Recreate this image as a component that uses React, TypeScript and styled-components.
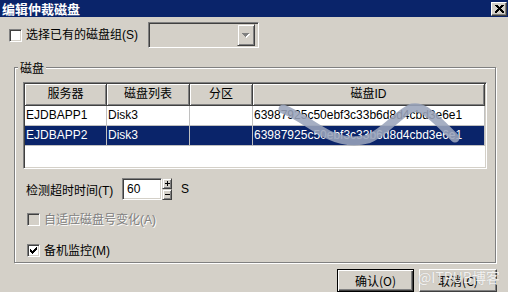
import React from "react";
import styled, { createGlobalStyle } from "styled-components";

const FACE = "#d4d0c8";
const SHADOW = "#808080";
const DARK = "#404040";
const NAVY = "#0a246a";

const GlobalStyle = createGlobalStyle`
  html, body { margin: 0; padding: 0; background: ${FACE}; }
  body {
    width: 508px; height: 292px; overflow: hidden;
    font-family: "Liberation Sans", "Noto Sans CJK SC", sans-serif;
    font-size: 12px; color: #000;
  }
  * { box-sizing: border-box; }
`;

const Dialog = styled.div`
  width: 508px; height: 292px; display: flex; flex-direction: column;
  background: ${FACE}; overflow: hidden;
`;

const TitleBar = styled.div`
  flex: 0 0 17px; height: 17px; background: ${NAVY};
  display: flex; align-items: center; justify-content: space-between;
  padding: 0 1px 0 2px;
`;

const Title = styled.span`
  color: #fff; font-weight: bold; font-size: 13px; line-height: 17px;
  font-family: "Noto Sans CJK SC", sans-serif;
`;

const CloseBtn = styled.div`
  width: 16px; height: 14px; background: ${FACE};
  border: 1px solid; border-color: #fff ${DARK} ${DARK} #fff;
  box-shadow: inset -1px -1px 0 ${SHADOW};
  display: flex; align-items: center; justify-content: center;
`;

const TopRow = styled.div`
  display: flex; align-items: center; height: 26px; margin-top: 5px; padding-left: 9px;
`;

const CheckLabel = styled.div<{ $w?: number; $disabled?: boolean }>`
  display: flex; align-items: center; gap: 4px; height: 13px;
  ${(p) => (p.$w ? `flex: 0 0 ${p.$w}px;` : "")}
  color: ${(p) => (p.$disabled ? SHADOW : "#000")};
  text-shadow: ${(p) => (p.$disabled ? "1px 1px 0 #fff" : "none")};
  line-height: 14px; white-space: nowrap;
`;

const Box = styled.div<{ $disabled?: boolean }>`
  flex: 0 0 13px; width: 13px; height: 13px;
  background: ${(p) => (p.$disabled ? FACE : "#fff")};
  border: 1px solid; border-color: ${SHADOW} #fff #fff ${SHADOW};
  box-shadow: inset 1px 1px 0 ${DARK}, inset -1px -1px 0 ${FACE};
  display: flex; align-items: center; justify-content: center;
`;

const Combo = styled.div`
  width: 111px; height: 26px; background: ${FACE};
  border: 1px solid; border-color: ${SHADOW} #fff #fff ${SHADOW};
  box-shadow: inset 1px 1px 0 ${DARK}, inset -1px -1px 0 ${FACE};
  display: flex; align-items: center; justify-content: flex-end; padding: 2px 3px 2px 2px;
`;

const ComboBtn = styled.div`
  width: 18px; height: 22px; background: ${FACE};
  border: 1px solid; border-color: ${FACE} ${DARK} ${DARK} ${FACE};
  box-shadow: inset 1px 1px 0 #fff, inset -1px -1px 0 ${SHADOW};
  display: flex; align-items: center; justify-content: center;
`;

const Group = styled.div`
  margin: 19px 0 0 14px; width: 482px; height: 197px;
  border: 1px solid ${SHADOW};
  box-shadow: 1px 1px 0 #fff, inset 1px 1px 0 #fff;
  display: flex; flex-direction: column;
`;

const Legend = styled.span`
  align-self: flex-start; margin: -7px 0 0 3px; padding: 0 2px;
  background: ${FACE}; height: 14px; line-height: 14px;
  font-family: "Noto Sans CJK SC", sans-serif;
`;

const ListView = styled.div`
  position: relative; margin: 7px 0 0 8px; width: 464px; height: 87px;
  background: #fff; overflow: hidden;
  border: 1px solid; border-color: ${SHADOW} #fff #fff ${SHADOW};
  box-shadow: inset 1px 1px 0 ${DARK}, inset -1px -1px 0 ${FACE};
  padding: 1px;
`;

const Header = styled.div`
  display: flex; height: 22px;
`;

const HeaderCell = styled.div<{ $w: number }>`
  flex: 0 0 ${(p) => p.$w}px; height: 22px; background: ${FACE};
  border-right: 1px solid ${DARK}; border-bottom: 1px solid ${DARK};
  box-shadow: inset 1px 1px 0 #fff, inset -1px -1px 0 ${SHADOW};
  text-align: center; line-height: 21px; white-space: nowrap; overflow: hidden;
`;

const Row = styled.div<{ $sel?: boolean }>`
  display: flex; height: 20px;
  background: ${(p) => (p.$sel ? NAVY : "#fff")};
  color: ${(p) => (p.$sel ? "#fff" : "#000")};
`;

const Cell = styled.div<{ $w: number }>`
  flex: 0 0 ${(p) => p.$w}px; height: 20px;
  border-right: 1px solid #c0c0c0; border-bottom: 1px solid #c0c0c0;
  padding-left: 1px; line-height: 19px; white-space: nowrap; overflow: hidden;
`;

const Scribble = styled.svg`
  position: absolute; left: 0; top: 0; pointer-events: none;
`;

const SpinRow = styled.div`
  display: flex; align-items: center; margin-top: 9px; padding-left: 11px; height: 22px;
`;

const FieldLabel = styled.span`
  flex: 0 0 96px; white-space: nowrap;
`;

const Input = styled.div`
  width: 40px; height: 22px; background: #fff;
  border: 1px solid; border-color: ${SHADOW} #fff #fff ${SHADOW};
  box-shadow: inset 1px 1px 0 ${DARK}, inset -1px -1px 0 ${FACE};
  padding-left: 4px; line-height: 20px;
`;

const Spin = styled.div`
  width: 10px; height: 22px; display: flex; flex-direction: column;
`;

const SpinBtn = styled.div`
  flex: 1; background: ${FACE};
  border: 1px solid; border-color: ${FACE} ${DARK} ${DARK} ${FACE};
  box-shadow: inset 1px 1px 0 #fff, inset -1px -1px 0 ${SHADOW};
  display: flex; align-items: center; justify-content: center;
`;

const Unit = styled.span`
  margin-left: 9px;
`;

const CheckRow = styled.div<{ $mt: number }>`
  margin-top: ${(p) => p.$mt}px; padding-left: 12px;
`;

const ButtonRow = styled.div`
  position: relative; display: flex; justify-content: flex-end; gap: 5px;
  margin-top: 6px; padding-right: 11px;
`;

const Button = styled.div<{ $w: number; $default?: boolean }>`
  width: ${(p) => p.$w}px; height: 23px; flex: 0 0 auto; background: ${FACE};
  display: flex; align-items: center; justify-content: center;
  font-family: "Noto Sans CJK SC", "Liberation Sans", sans-serif;
  ${(p) =>
    p.$default
      ? `border: 1px solid #000; box-shadow: inset 1px 1px 0 #fff, inset -1px -1px 0 ${DARK}, inset -2px -2px 0 ${SHADOW};`
      : `border: 1px solid; border-color: #fff ${DARK} ${DARK} #fff; box-shadow: inset -1px -1px 0 ${SHADOW}, inset 1px 1px 0 ${FACE};`}
`;

const Watermark = styled.span`
  position: absolute; right: 8px; top: 1px;
  font-family: "Noto Sans CJK SC", sans-serif; font-size: 14px; line-height: 14px;
  color: rgba(255, 255, 255, 0.85);
  text-shadow: 0 0 1px rgba(150, 150, 150, 0.6);
  pointer-events: none; white-space: nowrap;
`;

const CheckMark = () => (
  <svg width="9" height="9" viewBox="0 0 9 9" shapeRendering="crispEdges">
    {[
      [7, 1], [6, 2], [7, 2], [1, 3], [5, 3], [6, 3], [7, 3],
      [1, 4], [2, 4], [4, 4], [5, 4], [6, 4], [1, 5], [2, 5], [3, 5], [4, 5], [5, 5],
      [2, 6], [3, 6], [4, 6], [3, 7],
    ].map(([x, y], i) => (
      <rect key={i} x={x} y={y} width="1" height="1" fill="#000" />
    ))}
  </svg>
);

const CheckBox = ({ checked, disabled }: { checked?: boolean; disabled?: boolean }) => (
  <Box $disabled={disabled}>{checked ? <CheckMark /> : null}</Box>
);

const cols = [82, 83, 63, 232];

export default function App() {
  return (
    <>
      <GlobalStyle />
      <Dialog>
        <TitleBar>
          <Title>编辑仲裁磁盘</Title>
          <CloseBtn>
            <svg width="9" height="8" viewBox="0 0 9 8" shapeRendering="crispEdges">
              <path d="M0.5 0 L8.5 8 M1.5 0 L9 7.5 M8.5 0 L0.5 8 M7.5 0 L0 7.5" stroke="#000" strokeWidth="1" />
            </svg>
          </CloseBtn>
        </TitleBar>

        <TopRow>
          <CheckLabel $w={139}>
            <CheckBox />
            <span>选择已有的磁盘组(S)</span>
          </CheckLabel>
          <Combo>
            <ComboBtn>
              <svg width="8" height="5" viewBox="0 0 8 5" shapeRendering="crispEdges">
                <path d="M0 0 H7 L3.5 4 Z" fill="#fff" transform="translate(1,1)" />
                <path d="M0 0 H7 L3.5 4 Z" fill={SHADOW} />
              </svg>
            </ComboBtn>
          </Combo>
        </TopRow>

        <Group>
          <Legend>磁盘</Legend>
          <ListView>
            <Header>
              <HeaderCell $w={cols[0]}>服务器</HeaderCell>
              <HeaderCell $w={cols[1]}>磁盘列表</HeaderCell>
              <HeaderCell $w={cols[2]}>分区</HeaderCell>
              <HeaderCell $w={cols[3]}>磁盘ID</HeaderCell>
            </Header>
            <Row>
              <Cell $w={cols[0]}>EJDBAPP1</Cell>
              <Cell $w={cols[1]}>Disk3</Cell>
              <Cell $w={cols[2]}></Cell>
              <Cell $w={cols[3]}>63987925c50ebf3c33b6d8d4cbd3e6e1</Cell>
            </Row>
            <Row $sel>
              <Cell $w={cols[0]}>EJDBAPP2</Cell>
              <Cell $w={cols[1]}>Disk3</Cell>
              <Cell $w={cols[2]}></Cell>
              <Cell $w={cols[3]}>63987925c50ebf3c33b6d8d4cbd3e6e1</Cell>
            </Row>
            <Scribble width="464" height="87" viewBox="0 0 464 87">
              <path
                d="M259 26 C275 32 290 45 305 52 C318 58 330 60 344 56 C360 50 375 30 388 25 C398 23 405 30 418 42 L431 55"
                fill="none"
                stroke="#9aa4bb"
                strokeOpacity="0.88"
                strokeWidth="9"
                strokeLinecap="round"
                strokeLinejoin="round"
              />
            </Scribble>
          </ListView>

          <SpinRow>
            <FieldLabel>检测超时时间(T)</FieldLabel>
            <Input>60</Input>
            <Spin>
              <SpinBtn>
                <svg width="5" height="5" viewBox="0 0 5 5" shapeRendering="crispEdges">
                  <rect x="2" y="0" width="1" height="5" fill="#000" />
                  <rect x="0" y="2" width="5" height="1" fill="#000" />
                </svg>
              </SpinBtn>
              <SpinBtn>
                <svg width="5" height="3" viewBox="0 0 5 3" shapeRendering="crispEdges">
                  <rect x="0" y="1" width="5" height="1" fill="#000" />
                </svg>
              </SpinBtn>
            </Spin>
            <Unit>S</Unit>
          </SpinRow>

          <CheckRow $mt={13}>
            <CheckLabel $disabled>
              <CheckBox disabled />
              <span>自适应磁盘号变化(A)</span>
            </CheckLabel>
          </CheckRow>

          <CheckRow $mt={18}>
            <CheckLabel>
              <CheckBox checked />
              <span>备机监控(M)</span>
            </CheckLabel>
          </CheckRow>
        </Group>

        <ButtonRow>
          <Button $w={77} $default>确认(O)</Button>
          <Button $w={78}>取消(C)</Button>
          <Watermark>@ITPUB博客</Watermark>
        </ButtonRow>
      </Dialog>
    </>
  );
}
